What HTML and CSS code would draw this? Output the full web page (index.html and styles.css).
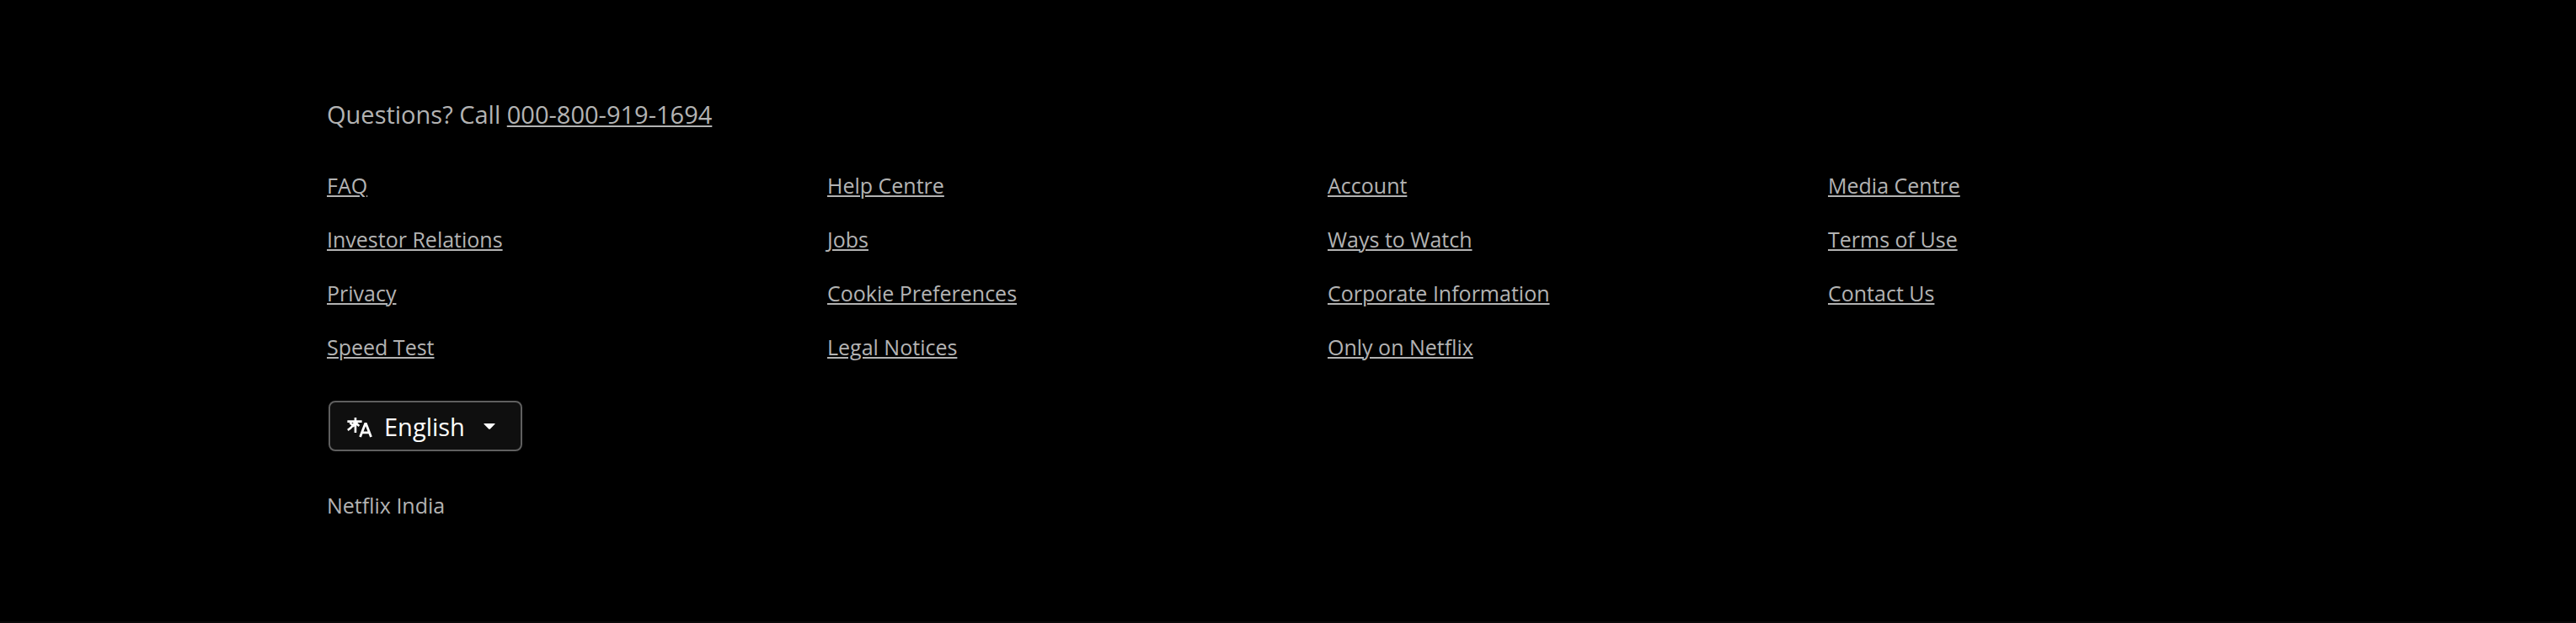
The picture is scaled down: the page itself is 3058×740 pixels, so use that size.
FILE: index.html
```html
<!DOCTYPE html>
<html lang="en">
<head>
<meta charset="utf-8">
<meta name="viewport" content="width=device-width, initial-scale=1">
<title>Netflix India</title>
<link rel="stylesheet" href="styles.css">
</head>
<body>
<footer class="footer">
  <p class="contact">Questions? Call <a href="tel:000-800-919-1694">000-800-919-1694</a></p>
  <ul class="links">
    <li><a href="#">FAQ</a></li>
    <li><a href="#">Help Centre</a></li>
    <li><a href="#">Account</a></li>
    <li><a href="#">Media Centre</a></li>
    <li><a href="#">Investor Relations</a></li>
    <li><a href="#">Jobs</a></li>
    <li><a href="#">Ways to Watch</a></li>
    <li><a href="#">Terms of Use</a></li>
    <li><a href="#">Privacy</a></li>
    <li><a href="#">Cookie Preferences</a></li>
    <li><a href="#">Corporate Information</a></li>
    <li><a href="#">Contact Us</a></li>
    <li><a href="#">Speed Test</a></li>
    <li><a href="#">Legal Notices</a></li>
    <li><a href="#">Only on Netflix</a></li>
  </ul>
  <label class="language" for="language">
    <svg class="language-icon" viewBox="0 0 16 16" fill="none" stroke="currentColor" aria-hidden="true">
      <path stroke-width="1.4" d="M.2 5.1H9.4M5.3 2.6v9.7M5.1 5.4C4.2 7.4 2.6 9.3.4 10.6M1.8 6l2.8 2.2M5.8 6c.5.9 1.1 1.5 1.9 2"/>
      <path stroke-width="1.5" d="M8.3 14.9 11.5 6.6h.5l3.2 8.3M9.4 12.2h4.7"/>
    </svg>
    <select class="language-select" id="language" aria-label="Select language">
      <option>English</option>
    </select>
    <svg class="language-caret" viewBox="0 0 16 8" fill="currentColor" aria-hidden="true">
      <path d="M1 0h14q1 0 .4.9L9 7.4q-1 .9-2 0L.6.9Q0 0 1 0Z"/>
    </svg>
  </label>
  <p class="region">Netflix India</p>
</footer>
</body>
</html>
```
FILE: styles.css
```css
* {
  box-sizing: border-box;
}

body {
  margin: 0;
  min-height: 100vh;
  background: #000;
  border-bottom: 2px solid #0a0a0a;
  color: #b3b3b3;
  font-family: "Open Sans", "Noto Sans", sans-serif;
  font-size: 25px;
  line-height: 40px;
}

.footer {
  display: flex;
  flex-direction: column;
  align-items: flex-start;
  padding: 112px 388px;
}

.footer a {
  color: inherit;
  text-decoration: underline;
  text-decoration-thickness: 2px;
  text-underline-offset: 2px;
}

.contact {
  margin: 0 0 40px;
  font-size: 29px;
  line-height: 48px;
}

.links {
  display: grid;
  grid-template-columns: repeat(4, 1fr);
  gap: 24px 94px;
  align-self: stretch;
  margin: 0 0 44px;
  padding: 0;
  list-style: none;
}

.language {
  display: flex;
  align-items: center;
  height: 60px;
  margin: 0 2px 44px;
  padding: 0 30px 0 20px;
  background: #0f0f0f;
  border: 2px solid #5f5f5f;
  border-radius: 8px;
  color: #fff;
}

.language-icon {
  width: 30px;
  height: 30px;
}

.language-select {
  appearance: none;
  margin: 0 22px 0 14px;
  padding: 2px 0 0;
  background: transparent;
  border: 0;
  color: inherit;
  font-family: inherit;
  font-size: 29px;
  font-weight: 400;
  line-height: 48px;
}

.language-caret {
  width: 14px;
  height: 7px;
}

.region {
  margin: 0;
}
```
